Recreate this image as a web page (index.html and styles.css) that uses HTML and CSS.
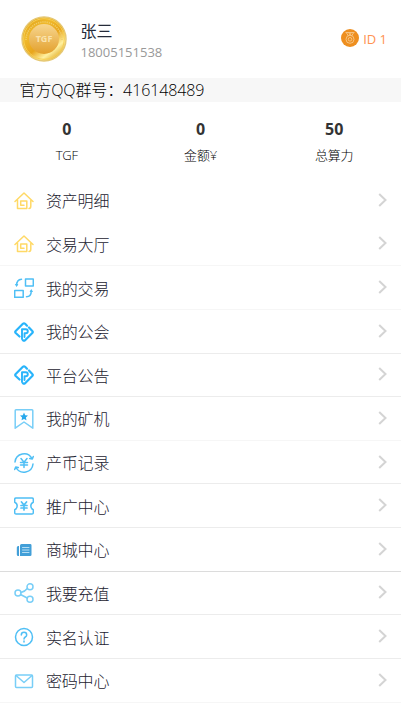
FILE: index.html
```html
<!DOCTYPE html>
<html lang="zh-CN">
<head>
<meta charset="utf-8">
<title>个人中心</title>
<link rel="stylesheet" href="styles.css">
</head>
<body>
<header class="profile">
  <svg class="avatar" viewBox="0 0 46 46">
    <defs>
      <linearGradient id="rim" x1="0" y1="0" x2=".8" y2="1"><stop offset="0" stop-color="#d99a18"/><stop offset=".35" stop-color="#f0b92c"/><stop offset=".6" stop-color="#e8a51c"/><stop offset=".8" stop-color="#fff1a0"/><stop offset="1" stop-color="#d79a16"/></linearGradient>
      <linearGradient id="face" x1="0" y1="0" x2="0" y2="1"><stop offset="0" stop-color="#f7d690"/><stop offset="1" stop-color="#e3a02c"/></linearGradient>
    </defs>
    <circle cx="23" cy="23" r="22" fill="url(#rim)" stroke="#e6c873" stroke-width="1.4"/>
    <circle cx="23" cy="23" r="20.3" fill="none" stroke="#f8cf50" stroke-width="1"/>
    <path d="M5 24A18 18 0 0 1 41 24" fill="none" stroke="#f0cd68" stroke-width="1.5" stroke-dasharray="1.200 1"/>
    <circle cx="23" cy="23" r="15" fill="url(#face)"/>
    <text x="23" y="26.400" class="coin-text">TGF</text>
  </svg>
  <div class="person"><div class="name">张三</div><div class="phone">18005151538</div></div>
  <div class="member">
    <svg class="medal" viewBox="0 0 18 18"><circle cx="9" cy="9" r="9" fill="#ee8f20"/><g fill="none" stroke="#f8cf98" stroke-width=".8"><path d="M4.500 3.500h9M5.500 4l2 3M12.500 4l-2 3M8 4l1 2 1-2"/><circle cx="9" cy="10.300" r="4"/><circle cx="9" cy="10.300" r="1.800"/></g></svg>
    <span>ID 1</span>
  </div>
</header>
<div class="notice">官方QQ群号：416148489</div>
<section class="stats">
  <div class="stat"><b>0</b><span>TGF</span></div>
  <div class="stat"><b>0</b><span>金额¥</span></div>
  <div class="stat"><b>50</b><span>总算力</span></div>
</section>
<svg class="defs">
  <symbol id="home" viewBox="0 0 20 20"><path d="M1 10.500 10 2l9 8.500M3.500 9v8.500h9.300V10H6.700v4.200h3.300M16.800 9.500v5.500q0 2.500-1.800 2.500"/></symbol>
  <symbol id="swap" viewBox="0 0 20 20"><path d="M11.500 1h7.800v7h-7.800zM.7 12.500h8.500v6.800H.7zM7.500 1.300C4.500 1.500 2.600 3.500 2.600 7.500M12.500 18.700c3 0 4.800-2 4.800-6"/><path class="tip" d="M.8 6h3.600L2.600 9zM15.500 14h3.600l-1.800-3z"/></symbol>
  <symbol id="guild" viewBox="0 0 20 20"><path d="M5.500 14.500 1.700 11Q.7 10 1.700 9l7.200-7.200q1.100-1 2.200 0L13 3.700M15 5.500 18.300 9q1 1 0 2l-7.200 7.200q-1.100 1-2.200 0" stroke-width="2.200"/><path d="M8 17V7.300h3.800q2 0 2 2t-2 2h-1.300V15" stroke-width="1.900"/></symbol>
  <symbol id="ribbon" viewBox="0 0 20 20"><path d="M2 .8h16q.8 0 .8.800v17.600L10 13l-8.800 6.200V1.600Q1.200.8 2 .8z"/><path class="star" d="m10 3.500 1.200 2.700 2.800.3-2.100 1.900.6 2.900L10 9.900l-2.500 1.400.6-2.900L6 6.500l2.800-.3z"/></symbol>
  <symbol id="coin" viewBox="0 0 20 20"><path d="M1 9A9.100 9.100 0 0 1 18 5.500M19 11A9.100 9.100 0 0 1 2 14.500M19.300 3.500 18.300 6l-2.600-.6M.7 16.500l1-2.500 2.600.6M7 5.500l3 3.700 3-3.700M6.500 9.500h7M6.500 12h7M10 9v5.500"/></symbol>
  <symbol id="ticket" viewBox="0 0 20 20"><path d="M2 2h16q1.300 0 1.300 1.300v3q-2.500 1-2.500 3.700t2.500 3.700v3q0 1.300-1.300 1.300H2q-1.300 0-1.300-1.300v-3q2.500-1 2.500-3.700T.7 6.300v-3Q.7 2 2 2z"/><path d="m7.500 6 2.500 3 2.500-3M7 9.500h6M7 12h6M10 9v5" stroke-width="1.700"/></symbol>
  <symbol id="news" viewBox="0 0 20 20"><path class="solid" d="M7.500 4h8.700q1.300 0 1.300 1.300v9.400q0 1.300-1.300 1.300H6V5.500Q6 4 7.500 4zM4.300 6H5v10h-.7Q2.800 16 2.800 14.500v-7Q2.800 6 4.300 6z"/><path class="lines" d="M8.500 7.500h6.500M8.500 10h6.500M8.500 12.500h6.500"/></symbol>
  <symbol id="share" viewBox="0 0 20 20"><circle cx="4" cy="10" r="3"/><circle cx="16" cy="3.800" r="3"/><circle cx="16" cy="16.200" r="3"/><path d="M7 9.500Q11 8.500 13.300 5.500M6.500 11.500l6.700 3.500"/></symbol>
  <symbol id="help" viewBox="0 0 20 20"><circle cx="10" cy="10" r="8.500"/><path d="M7.300 8Q7.300 5.300 10 5.300T12.700 8q0 1.200-1.400 2Q10 10.800 10 12M10 14v1"/></symbol>
  <symbol id="mail" viewBox="0 0 20 20"><rect x="1.500" y="4" width="17" height="12.500" rx="1"/><path d="m2 4.500 8 7 8-7"/></symbol>
  <symbol id="arrow" viewBox="0 0 9 16"><path d="m1.200 2 6.300 6-6.300 6"/></symbol>
</svg>
<nav class="menu">
  <a class="row plain"><svg class="icon gold"><use href="#home"/></svg><span>资产明细</span><svg class="arrow"><use href="#arrow"/></svg></a>
  <a class="row faint"><svg class="icon gold"><use href="#home"/></svg><span>交易大厅</span><svg class="arrow"><use href="#arrow"/></svg></a>
  <a class="row faint"><svg class="icon"><use href="#swap"/></svg><span>我的交易</span><svg class="arrow"><use href="#arrow"/></svg></a>
  <a class="row"><svg class="icon guild"><use href="#guild"/></svg><span>我的公会</span><svg class="arrow"><use href="#arrow"/></svg></a>
  <a class="row"><svg class="icon guild"><use href="#guild"/></svg><span>平台公告</span><svg class="arrow"><use href="#arrow"/></svg></a>
  <a class="row faint"><svg class="icon light"><use href="#ribbon"/></svg><span>我的矿机</span><svg class="arrow"><use href="#arrow"/></svg></a>
  <a class="row"><svg class="icon"><use href="#coin"/></svg><span>产币记录</span><svg class="arrow"><use href="#arrow"/></svg></a>
  <a class="row"><svg class="icon"><use href="#ticket"/></svg><span>推广中心</span><svg class="arrow"><use href="#arrow"/></svg></a>
  <a class="row strong"><svg class="icon"><use href="#news"/></svg><span>商城中心</span><svg class="arrow"><use href="#arrow"/></svg></a>
  <a class="row"><svg class="icon light"><use href="#share"/></svg><span>我要充值</span><svg class="arrow"><use href="#arrow"/></svg></a>
  <a class="row"><svg class="icon"><use href="#help"/></svg><span>实名认证</span><svg class="arrow"><use href="#arrow"/></svg></a>
  <a class="row faint"><svg class="icon light"><use href="#mail"/></svg><span>密码中心</span><svg class="arrow"><use href="#arrow"/></svg></a>
</nav>
</body>
</html>
```
FILE: styles.css
```css
* { box-sizing: border-box; }
body {
  margin: 0;
  height: 711px;
  overflow: hidden;
  background: #fff;
  color: #000;
  font-family: "Open Sans", "Noto Sans CJK SC", sans-serif;
  font-weight: 300;
}
.profile { display: flex; align-items: center; height: 78px; padding: 0 14px 0 21px; }
.avatar { width: 46px; height: 46px; }
.coin-text { font: 700 9px "Open Sans", sans-serif; fill: #fae3ad; text-anchor: middle; }
.person { margin-left: 13.5px; padding-top: 3px; }
.name { font-size: 16px; line-height: 22px; font-weight: 400; color: #252b3a; }
.phone { font-size: 13px; line-height: 20px; font-weight: 400; color: #999; }
.member { display: flex; align-items: center; gap: 4px; margin-left: auto; margin-top: -2px; font-size: 13px; font-weight: 400; color: #ff9252; }
.member span { padding-top: 2px; }
.medal { width: 18px; height: 18px; }
.notice { height: 24px; padding-left: 19.5px; background: #f7f7f7; font-size: 16px; line-height: 25px; letter-spacing: -.12px; white-space: nowrap; }
.stats { display: flex; height: 77px; padding-top: 16px; }
.stat { flex: 1; display: flex; flex-direction: column; align-items: center; }
.stat b { font-size: 16px; line-height: 23px; font-weight: 700; color: #333; }
.stat span { font-size: 13px; line-height: 29px; letter-spacing: -.2px; }
.defs { display: none; }
.row { display: flex; align-items: center; height: 43.64px; padding: 1px 14px 0; border-bottom: 1px solid #ececec; font-size: 16px; line-height: 24px; color: #1c2230; }
.row.plain { border-color: transparent; }
.row.faint { border-color: #f6f6f6; }
.row.strong { border-color: #dcdcdc; }
.row span { margin-left: 12px; padding-top: 1px; letter-spacing: -.2px; }
.icon { width: 20px; height: 20px; fill: none; stroke: #4fbff5; stroke-width: 1.5; stroke-linejoin: round; stroke-linecap: round; }
.icon.gold { stroke: #ffd966; }
.icon.guild { stroke: #28b4fb; }
.icon.light { stroke: #78cef7; }
.solid { fill: #429fd8; stroke: none; }
.star { fill: #28a8ec; stroke: none; }
.tip { fill: #4fbff5; stroke: none; }
.lines { stroke: #b5ddf3; stroke-width: 1; }
.arrow { width: 9px; height: 16px; margin-left: auto; margin-top: -2px; fill: none; stroke: #d4d4d4; stroke-width: 2; }
```
